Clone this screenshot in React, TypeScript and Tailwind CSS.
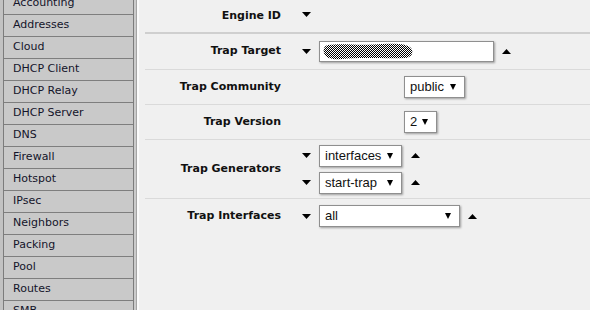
import type { ReactNode } from "react"

const menu = [
  "Accounting",
  "Addresses",
  "Cloud",
  "DHCP Client",
  "DHCP Relay",
  "DHCP Server",
  "DNS",
  "Firewall",
  "Hotspot",
  "IPsec",
  "Neighbors",
  "Packing",
  "Pool",
  "Routes",
  "SMB",
]

function Down() {
  return (
    <svg width="9" height="5" viewBox="0 0 9 5" className="block">
      <path d="M0 0 H9 L4.5 5 Z" fill="#000" />
    </svg>
  )
}

function Up() {
  return (
    <svg width="9" height="5" viewBox="0 0 9 5" className="block">
      <path d="M0 5 H9 L4.5 0 Z" fill="#000" />
    </svg>
  )
}

function Select({ value, width }: { value: string; width: string }) {
  return (
    <div
      className={`${width} h-[22px] flex items-center justify-between pl-[5px] pr-[8px] bg-white border border-[#8f8f8f] shadow-[1px_1px_2px_rgba(0,0,0,0.35)] text-[13px] text-[#111] font-['Liberation_Sans',Arial,sans-serif]`}
    >
      <span>{value}</span>
      <svg width="6" height="6" viewBox="0 0 6 6" className="block">
        <path d="M0 0 H6 L3 6 Z" fill="#000" />
      </svg>
    </div>
  )
}

function Row({ label, height, thick, children }: { label: string; height: string; thick?: boolean; children: ReactNode }) {
  return (
    <div
      className={`flex items-center ${height} ${thick ? "border-b-2 border-[#cfcfcf]" : "border-b border-[#dadada]"}`}
    >
      <div className="w-[136px] text-right font-bold text-[11px] text-[#111]">{label}</div>
      {children}
    </div>
  )
}

export default function App() {
  return (
    <div className="h-[310px] w-[590px] overflow-hidden flex bg-[#f0f0f0] font-['DejaVu_Sans',Verdana,sans-serif]">
      {/* sidebar */}
      <div className="flex shrink-0">
        <div className="w-[3px] bg-[#c2c2c2]" />
        <div className="w-[131px] border-x border-[#7c7c7c] bg-[#c8c8c8] -mt-[7px]">
          {menu.map((m) => (
            <div
              key={m}
              className="h-[22px] border-b border-[#7e7e7e] bg-[#c9c9c9] pl-[9px] flex items-center text-[11px] text-[#14142a]"
            >
              {m}
            </div>
          ))}
        </div>
        <div className="w-[2px] bg-[#cbcbcb]" />
        <div className="w-[1px] bg-[#a4a4a4]" />
        <div className="w-[2px] bg-[#fbfbfb]" />
      </div>

      {/* form */}
      <div className="flex-1 pl-[6px]">
        <Row label="Engine ID" height="h-[34px]" thick>
          <div className="ml-[21px] -mt-[3px]">
            <Down />
          </div>
        </Row>

        <Row label="Trap Target" height="h-[36px]">
          <div className="ml-[21px]">
            <Down />
          </div>
          <div className="ml-[8px] w-[175px] h-[21px] bg-white border border-[#8f8f8f] shadow-[1px_1px_2px_rgba(0,0,0,0.35)] flex items-center pl-[2px]">
            <svg width="92" height="17" viewBox="0 0 92 17" className="block">
              <defs>
                <pattern id="chk" width="2" height="2" patternUnits="userSpaceOnUse">
                  <rect width="1" height="1" fill="#000" />
                  <rect x="1" y="1" width="1" height="1" fill="#000" />
                </pattern>
              </defs>
              <path
                d="M6 2 C 20 0, 40 3, 60 1 C 75 0, 86 1, 89 5 C 92 9, 90 14, 84 15 C 65 16, 40 14, 20 16 C 10 17, 3 15, 2 10 C 1 6, 2 3, 6 2 Z"
                fill="url(#chk)"
              />
            </svg>
          </div>
          <div className="ml-[8px]">
            <Up />
          </div>
        </Row>

        <Row label="Trap Community" height="h-[35px]">
          <div className="ml-[123px]">
            <Select value="public" width="w-[61px]" />
          </div>
        </Row>

        <Row label="Trap Version" height="h-[35px]">
          <div className="ml-[123px]">
            <Select value="2" width="w-[33px]" />
          </div>
        </Row>

        <Row label="Trap Generators" height="h-[59px]">
          <div className="flex flex-col gap-[5px]">
            {["interfaces", "start-trap"].map((v) => (
              <div key={v} className="flex items-center">
                <div className="ml-[21px]">
                  <Down />
                </div>
                <div className="ml-[8px]">
                  <Select value={v} width="w-[83px]" />
                </div>
                <div className="ml-[9px]">
                  <Up />
                </div>
              </div>
            ))}
          </div>
        </Row>

        <div className="flex items-center h-[34px]">
          <div className="w-[136px] text-right font-bold text-[11px] text-[#111]">Trap Interfaces</div>
          <div className="ml-[21px]">
            <Down />
          </div>
          <div className="ml-[8px]">
            <Select value="all" width="w-[141px]" />
          </div>
          <div className="ml-[8px]">
            <Up />
          </div>
        </div>
      </div>
    </div>
  )
}
